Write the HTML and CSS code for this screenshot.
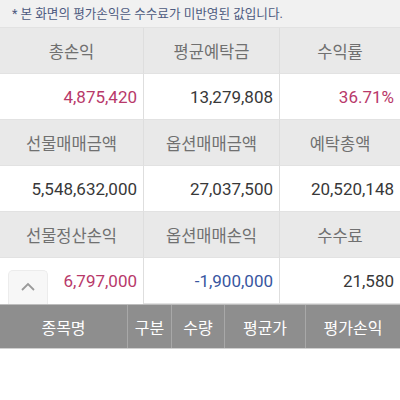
FILE: index.html
```html
<!DOCTYPE html>
<html lang="ko">
<head>
<meta charset="utf-8">
<link rel="stylesheet" href="styles.css">
</head>
<body>
<div class="notice">* 본 화면의 평가손익은 수수료가 미반영된 값입니다.</div>
<div class="grid">
  <div class="hd">총손익</div>
  <div class="hd">평균예탁금</div>
  <div class="hd last">수익률</div>
  <div class="val red">4,875,420</div>
  <div class="val">13,279,808</div>
  <div class="val red last">36.71%</div>
  <div class="hd">선물매매금액</div>
  <div class="hd">옵션매매금액</div>
  <div class="hd last">예탁총액</div>
  <div class="val">5,548,632,000</div>
  <div class="val">27,037,500</div>
  <div class="val last">20,520,148</div>
  <div class="hd">선물정산손익</div>
  <div class="hd">옵션매매손익</div>
  <div class="hd last">수수료</div>
  <div class="val red withbtn"><span class="upbtn"><svg width="16" height="10" viewBox="0 0 16 10"><path d="M2 8 L8 2 L14 8" fill="none" stroke="#9a9a9a" stroke-width="1.8"/></svg></span><span>6,797,000</span></div>
  <div class="val blue">-1,900,000</div>
  <div class="val last">21,580</div>
</div>
<div class="thead">
  <div class="th">종목명</div>
  <div class="th">구분</div>
  <div class="th">수량</div>
  <div class="th">평균가</div>
  <div class="th">평가손익</div>
</div>
</body>
</html>
```
FILE: styles.css
```css
html, body {
  margin: 0;
  padding: 0;
  background: #ffffff;
  font-family: Roboto, "Noto Sans CJK KR", sans-serif;
}
.notice {
  height: 28px;
  line-height: 28px;
  background: #f1f1f1;
  color: #4d5a80;
  font-size: 12.6px;
  padding-left: 12px;
  box-sizing: border-box;
  border-bottom: 1px solid #e2e2e2;
}
.grid {
  display: grid;
  grid-template-columns: 144px 136px 120px;
  grid-auto-rows: 46px;
}
.hd, .val {
  box-sizing: border-box;
  border-right: 1px solid #dedede;
  border-bottom: 1px solid #e2e2e2;
  display: flex;
  align-items: center;
}
.last { border-right: none; }
.hd {
  background: #e9e9e9;
  color: #707070;
  font-size: 16.5px;
  justify-content: center;
}
.val {
  background: #ffffff;
  color: #383838;
  font-size: 17px;
  justify-content: flex-end;
  padding-right: 6px;
}
.red { color: #b8396a; }
.blue { color: #3856a0; }
.withbtn {
  justify-content: space-between;
  padding-left: 8px;
  border-bottom: none;
}
.upbtn {
  align-self: flex-end;
  width: 40px;
  height: 34px;
  box-sizing: border-box;
  border: 1px solid #ececec;
  border-bottom: none;
  border-radius: 5px 5px 0 0;
  background: #f7f7f7;
  display: flex;
  justify-content: center;
  align-items: center;
  padding-bottom: 2px;
}
.thead {
  display: grid;
  grid-template-columns: 128px 44px 53px 81px 94px;
  height: 43px;
  background: #8e8e8e;
  border-top: 1px solid #bdbdbd;
  border-bottom: 1px solid #d0d0d0;
}
.th {
  display: flex;
  align-items: center;
  justify-content: center;
  color: #ffffff;
  font-size: 16px;
  border-right: 1px solid #a8a8a8;
}
.th:last-child { border-right: none; }
```
